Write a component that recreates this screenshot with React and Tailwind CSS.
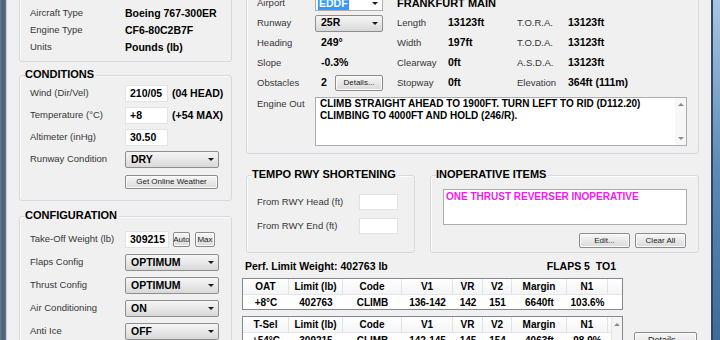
import React from 'react';

// small dropdown triangle used by the combo boxes
const Arrow = () => (
  <span className="h-0 w-0 border-x-[3px] border-t-[3px] border-x-transparent border-t-[#1a1a1a]" />
);

const UpTri = () => (
  <span className="h-0 w-0 border-x-[3px] border-b-[3px] border-x-transparent border-b-[#8a8a8a]" />
);
const DownTri = () => (
  <span className="h-0 w-0 border-x-[3px] border-t-[3px] border-x-transparent border-t-[#8a8a8a]" />
);

function GroupBox({ title, className = '', children }) {
  return (
    <div
      className={`relative shrink-0 rounded-[3px] border border-[#d5dae0] shadow-[inset_1px_1px_0_#fbfbfb] ${className}`}
    >
      {title && (
        <div className="absolute -top-[9px] left-[5px] bg-[#f0f0f0] pr-[2px] text-[11px] font-bold leading-[14px] text-black">
          {title}
        </div>
      )}
      {children}
    </div>
  );
}

function Row({ label, children }) {
  return (
    <div className="flex h-[17px] shrink-0 items-center">
      <div className="w-[95px] shrink-0 text-[9.5px] text-[#363636]">{label}</div>
      {children}
    </div>
  );
}

function Field({ value, className = 'w-[43px]' }) {
  return (
    <div
      className={`flex h-full shrink-0 items-center border border-[#e0e3e7] bg-white pl-[4px] text-[10.5px] font-bold text-black ${className}`}
    >
      {value}
    </div>
  );
}

function Select({ value, className = 'h-[17px] w-[94px]' }) {
  return (
    <div
      className={`flex shrink-0 items-center justify-between rounded-[2px] border border-[#8e8e8e] bg-linear-to-b from-[#f5f5f5] via-[#e8e8e8] to-[#d8d8d8] pl-[5px] pr-[4px] text-[10.5px] font-bold text-black ${className}`}
    >
      <span>{value}</span>
      <Arrow />
    </div>
  );
}

function Btn({ children, className = '' }) {
  return (
    <div
      className={`flex shrink-0 items-center justify-center rounded-[2px] border border-[#8b8b8b] bg-linear-to-b from-[#f7f7f7] to-[#dadada] text-[8px] text-[#222] shadow-[inset_0_0_0_1px_#fcfcfc] ${className}`}
    >
      {children}
    </div>
  );
}

const Lbl = ({ children, className = '' }) => (
  <div className={`shrink-0 text-[9.5px] text-[#363636] ${className}`}>{children}</div>
);
const Val = ({ children, className = '' }) => (
  <div className={`shrink-0 text-[10.5px] font-bold text-black ${className}`}>{children}</div>
);

const cols = 'grid grid-cols-[46px_54px_59px_51px_30px_29px_55px_41px_1fr]';

function PerfTable({ first, row, scroll = false }) {
  const head = [first, 'Limit (lb)', 'Code', 'V1', 'VR', 'V2', 'Margin', 'N1'];
  return (
    <div className="flex w-[381px] shrink-0 border border-[#828790] bg-white">
      <div className="flex-1">
        <div className={`${cols} h-[16px] border-b border-[#e5e5e5] bg-linear-to-b from-white to-[#f4f5f7]`}>
          {head.map((h) => (
            <div
              key={h}
              className="flex items-center justify-center border-r border-[#e3e3e3] text-[10px] font-bold text-black"
            >
              {h}
            </div>
          ))}
          <div />
        </div>
        <div className={`${cols} h-[14px]`}>
          {row.map((v, i) => (
            <div key={i} className="flex items-center justify-center text-[10px] font-bold text-black">
              {v}
            </div>
          ))}
          <div />
        </div>
      </div>
      {scroll && (
        <div className="flex w-[11px] flex-col items-center border-l border-[#e6e6e6] bg-[#f4f4f4] pt-[6px]">
          <UpTri />
        </div>
      )}
    </div>
  );
}

export default function App() {
  return (
    <div className="flex h-[340px] w-[720px] overflow-hidden bg-[#f0f0f0] font-['Liberation_Sans',Arial,sans-serif]">
      {/* left window frame */}
      <div className="w-[7px] shrink-0 border-r border-[#c5cfd9] bg-linear-to-r from-[#6a7b90] via-[#4a5d72] to-[#62758a]" />

      <div className="-mt-[12px] flex flex-1 pl-[12px] pr-[11px]">
        {/* left column */}
        <div className="flex w-[213px] shrink-0 flex-col">
          <GroupBox className="h-[74px] px-[10px] pt-[16px]">
            <Row label="Aircraft Type">
              <Val>Boeing 767-300ER</Val>
            </Row>
            <Row label="Engine Type">
              <Val>CF6-80C2B7F</Val>
            </Row>
            <Row label="Units">
              <Val>Pounds (lb)</Val>
            </Row>
          </GroupBox>

          <GroupBox title="CONDITIONS" className="mt-[13px] h-[126px] px-[10px] pt-[9px]">
            <div className="flex flex-col gap-[5px]">
              <Row label="Wind (Dir/Vel)">
                <Field value="210/05" />
                <Val className="ml-[4px]">(04 HEAD)</Val>
              </Row>
              <Row label="Temperature (°C)">
                <Field value="+8" />
                <Val className="ml-[4px]">(+54 MAX)</Val>
              </Row>
              <Row label="Altimeter (inHg)">
                <Field value="30.50" />
              </Row>
              <Row label="Runway Condition">
                <Select value="DRY" />
              </Row>
            </div>
            <Btn className="ml-[95px] mt-[7px] h-[14px] w-[93px]">Get Online Weather</Btn>
          </GroupBox>

          <GroupBox title="CONFIGURATION" className="mt-[15px] h-[150px] px-[10px] pt-[14px]">
            <div className="flex flex-col gap-[6px]">
              <Row label="Take-Off Weight (lb)">
                <Field value="309215" className="w-[44px]" />
                <Btn className="ml-[4px] h-[15px] w-[17px] text-[7px]">Auto</Btn>
                <Btn className="ml-[5px] h-[15px] w-[20px] text-[7px]">Max</Btn>
              </Row>
              <Row label="Flaps Config">
                <Select value="OPTIMUM" />
              </Row>
              <Row label="Thrust Config">
                <Select value="OPTIMUM" />
              </Row>
              <Row label="Air Conditioning">
                <Select value="ON" />
              </Row>
              <Row label="Anti Ice">
                <Select value="OFF" />
              </Row>
            </div>
          </GroupBox>
        </div>

        {/* right column */}
        <div className="ml-[14px] flex w-[453px] shrink-0 flex-col">
          <GroupBox className="h-[166px] pl-[10px] pr-[11px] pt-[4px]">
            <div className="flex h-[20px] items-center">
              <Lbl className="w-[58px]">Airport</Lbl>
              <div className="w-[82px] shrink-0">
                <div className="flex h-[16px] w-[68px] items-center justify-between border border-[#abadb3] bg-white pl-[2px] pr-[4px]">
                  <span className="bg-[#3399ff] px-[1px] text-[10.5px] font-bold leading-[13px] text-white">EDDF</span>
                  <Arrow />
                </div>
              </div>
              <Val className="text-[11px]">FRANKFURT MAIN</Val>
            </div>
            <div className="flex h-[20px] items-center">
              <Lbl className="w-[58px]">Runway</Lbl>
              <div className="w-[82px] shrink-0">
                <Select value="25R" className="h-[17px] w-[68px]" />
              </div>
              <Lbl className="w-[51px]">Length</Lbl>
              <Val className="w-[69px]">13123ft</Val>
              <Lbl className="w-[51px]">T.O.R.A.</Lbl>
              <Val>13123ft</Val>
            </div>
            <div className="flex h-[20px] items-center">
              <Lbl className="w-[58px]">Heading</Lbl>
              <Val className="w-[82px] pl-[6px]">249°</Val>
              <Lbl className="w-[51px]">Width</Lbl>
              <Val className="w-[69px]">197ft</Val>
              <Lbl className="w-[51px]">T.O.D.A.</Lbl>
              <Val>13123ft</Val>
            </div>
            <div className="flex h-[20px] items-center">
              <Lbl className="w-[58px]">Slope</Lbl>
              <Val className="w-[82px] pl-[6px]">-0.3%</Val>
              <Lbl className="w-[51px]">Clearway</Lbl>
              <Val className="w-[69px]">0ft</Val>
              <Lbl className="w-[51px]">A.S.D.A.</Lbl>
              <Val>13123ft</Val>
            </div>
            <div className="flex h-[20px] items-center">
              <Lbl className="w-[58px]">Obstacles</Lbl>
              <div className="flex w-[82px] shrink-0 items-center pl-[6px]">
                <Val className="w-[14px]">2</Val>
                <Btn className="h-[16px] w-[48px]">Details...</Btn>
              </div>
              <Lbl className="w-[51px]">Stopway</Lbl>
              <Val className="w-[69px]">0ft</Val>
              <Lbl className="w-[51px]">Elevation</Lbl>
              <Val>364ft (111m)</Val>
            </div>
            <div className="mt-[4px] flex">
              <Lbl className="w-[58px] pt-[1px] leading-[12px]">Engine Out</Lbl>
              <div className="flex h-[49px] flex-1 border border-[#abadb3] bg-white">
                <div className="flex-1 pl-[4px] text-[10px] font-bold leading-[12px] text-black">
                  CLIMB STRAIGHT AHEAD TO 1900FT. TURN LEFT TO RID (D112.20)
                  <br />
                  CLIMBING TO 4000FT AND HOLD (246/R).
                </div>
                <div className="flex w-[11px] flex-col items-center justify-between bg-[#f7f7f7] py-[5px]">
                  <UpTri />
                  <DownTri />
                </div>
              </div>
            </div>
          </GroupBox>

          <div className="mt-[21px] flex h-[78px] shrink-0 gap-[15px]">
            <GroupBox title="TEMPO RWY SHORTENING" className="w-[169px] pl-[10px] pt-[18px]">
              <div className="flex flex-col gap-[8px]">
                <div className="flex h-[16px] items-center">
                  <Lbl className="w-[102px]">From RWY Head (ft)</Lbl>
                  <div className="h-full w-[39px] border border-[#e0e3e7] bg-white" />
                </div>
                <div className="flex h-[16px] items-center">
                  <Lbl className="w-[102px]">From RWY End (ft)</Lbl>
                  <div className="h-full w-[39px] border border-[#e0e3e7] bg-white" />
                </div>
              </div>
            </GroupBox>
            <GroupBox title="INOPERATIVE ITEMS" className="flex-1 pl-[12px] pr-[11px] pt-[13px]">
              <div className="h-[36px] border border-[#abadb3] bg-white pl-[2px] text-[10px] font-bold leading-[13px] text-[#f01af0]">
                ONE THRUST REVERSER INOPERATIVE
              </div>
              <div className="mr-[1px] mt-[8px] flex justify-end gap-[5px]">
                <Btn className="h-[15px] w-[51px]">Edit...</Btn>
                <Btn className="h-[15px] w-[51px]">Clear All</Btn>
              </div>
            </GroupBox>
          </div>

          <div className="-ml-[4px] mt-[7px] flex shrink-0 flex-col">
            <div className="flex h-[14px] w-[381px] items-center justify-between pl-[3px] pr-[7px] text-[10.5px] font-bold text-black">
              <span>Perf. Limit Weight: 402763 lb</span>
              <span className="whitespace-pre">FLAPS 5  TO1</span>
            </div>
            <div className="mt-[4px]">
              <PerfTable
                first="OAT"
                row={['+8°C', '402763', 'CLIMB', '136-142', '142', '151', '6640ft', '103.6%']}
              />
            </div>
            <div className="mt-[6px] flex items-start">
              <PerfTable
                first="T-Sel"
                scroll
                row={['+54°C', '309215', 'CLIMB', '142-145', '145', '154', '4063ft', '98.9%']}
              />
              <Btn className="ml-[11px] mt-[16px] h-[18px] w-[63px] text-[9px]">Details...</Btn>
            </div>
          </div>
        </div>
      </div>

      {/* right window frame */}
      <div className="w-[9px] shrink-0 border-l-2 border-[#2e4760] bg-linear-to-b from-[#a8c6e2] via-[#5d89b4] to-[#3f6b96]" />
    </div>
  );
}
